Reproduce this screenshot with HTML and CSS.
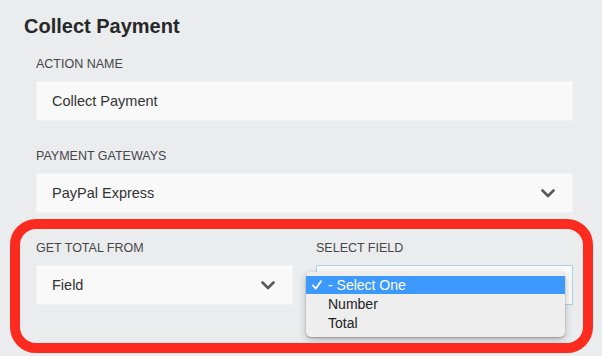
FILE: index.html
```html
<!DOCTYPE html>
<html>
<head>
<meta charset="utf-8">
<link rel="stylesheet" href="styles.css">
</head>
<body>
<div class="page">
  <h1 class="title">Collect Payment</h1>
  <div class="form">
    <div class="group">
      <div class="label">ACTION NAME</div>
      <div class="box">Collect Payment</div>
    </div>
    <div class="group">
      <div class="label">PAYMENT GATEWAYS</div>
      <div class="box select">PayPal Express
        <svg class="chev" width="14" height="9" viewBox="0 0 14 9"><polyline points="1.5,1.5 7,7 12.5,1.5" fill="none" stroke="#5a5a5a" stroke-width="2.6" stroke-linecap="round" stroke-linejoin="round"/></svg>
      </div>
    </div>
    <div class="row">
      <div class="col">
        <div class="label">GET TOTAL FROM</div>
        <div class="box select">Field
          <svg class="chev" width="14" height="9" viewBox="0 0 14 9"><polyline points="1.5,1.5 7,7 12.5,1.5" fill="none" stroke="#5a5a5a" stroke-width="2.6" stroke-linecap="round" stroke-linejoin="round"/></svg>
        </div>
      </div>
      <div class="col">
        <div class="label">SELECT FIELD</div>
        <div class="box focus">
          <div class="popup">
            <div class="opt active"><svg class="check" width="10" height="10" viewBox="0 0 10 10"><polyline points="1,5.5 3.8,8.6 9,1.2" fill="none" stroke="#fff" stroke-width="1.8" stroke-linecap="round" stroke-linejoin="round"/></svg>- Select One</div>
            <div class="opt">Number</div>
            <div class="opt">Total</div>
          </div>
        </div>
      </div>
    </div>
  </div>
  <div class="annotation"></div>
</div>
</body>
</html>
```

FILE: styles.css
```css
html, body {
  margin: 0;
  padding: 0;
  background: #ebecee;
}
body {
  width: 602px;
  height: 356px;
  overflow: hidden;
  font-family: "Liberation Sans", Arial, sans-serif;
}
.page {
  position: relative;
  padding: 14px 0 0 24px;
}
.title {
  margin: 0 0 19px;
  font-size: 20px;
  line-height: 24px;
  font-weight: bold;
  color: #262829;
}
.form {
  padding-left: 12px;
  width: 537px;
}
.group {
  margin-bottom: 28px;
}
.label {
  font-size: 12.5px;
  line-height: 15px;
  color: #454648;
  margin-bottom: 9px;
}
.box {
  box-sizing: border-box;
  height: 40px;
  background: #f9f9f9;
  border: 1px solid #f3f3f4;
  padding: 0 15px;
  font-size: 14.5px;
  line-height: 38px;
  color: #333;
  display: flex;
  align-items: center;
  justify-content: space-between;
}
.chev {
  display: block;
  margin-right: 2px;
}
.row {
  display: flex;
  gap: 23px;
}
.col {
  flex: 1;
}
.focus {
  position: relative;
  border: 1px solid #acd3ea;
}
.popup {
  position: absolute;
  left: -11px;
  top: 6px;
  width: 259px;
  box-sizing: border-box;
  padding: 4px 0;
  background: #eeeeee;
  border-radius: 5px;
  box-shadow: 0 1px 2px rgba(0,0,0,0.25), 0 3px 8px rgba(0,0,0,0.22);
}
.opt {
  position: relative;
  height: 19px;
  line-height: 19px;
  padding-left: 22px;
  font-size: 14px;
  color: #222;
}
.opt.active {
  background: #3d99fc;
  color: #fff;
  height: 18px;
  line-height: 18px;
  margin-bottom: 1px;
}
.check {
  position: absolute;
  left: 6px;
  top: 4px;
}
.annotation {
  position: absolute;
  left: 10px;
  top: 219px;
  width: 583px;
  height: 134px;
  box-sizing: border-box;
  border: 10px solid #fc2b20;
  border-radius: 26px;
}
```
